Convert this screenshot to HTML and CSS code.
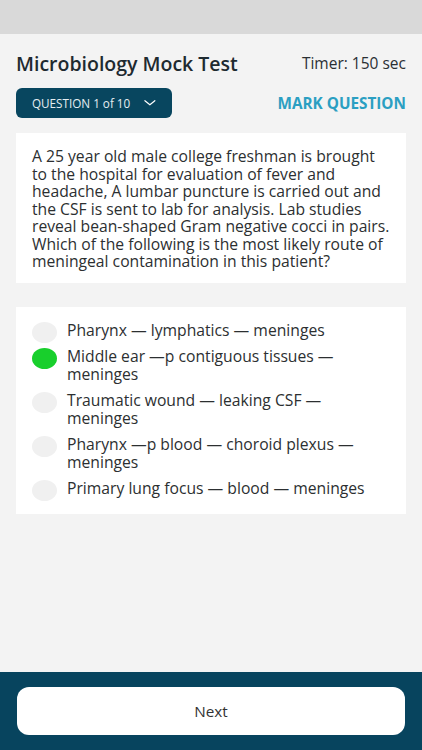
FILE: index.html
```html
<!DOCTYPE html>
<html lang="en">
<head>
    <meta charset="UTF-8" />
    <meta name="viewport" content="width=device-width, initial-scale=1.0" />
    <title>Microbiology Mock Test</title>
    <link rel="stylesheet" href="styles.css">
</head>
<body>
    <div class="statusbar"></div>

    <div class="content">
        <div class="header">
            <h1 class="title">Microbiology Mock Test</h1>
            <span class="timer">Timer: 150 sec</span>
        </div>

        <div class="toolbar">
            <button class="question-picker">
                QUESTION 1 of 10
                <svg width="13" height="8" viewBox="0 0 13 8"><path d="M1 1.5 L6.5 6 L12 1.5" fill="none" stroke="#fff" stroke-width="1.3" stroke-linecap="round" stroke-linejoin="round"/></svg>
            </button>
            <a href="#" class="mark">MARK QUESTION</a>
        </div>

        <div class="card question">
            A 25 year old male college freshman is brought to the hospital for evaluation of fever and headache, A lumbar puncture is carried out and the CSF is sent to lab for analysis. Lab studies reveal bean-shaped Gram negative cocci in pairs. Which of the following is the most likely route of meningeal contamination in this patient?
        </div>

        <!-- answer options -->
        <div class="card options">
            <div class="option"><span class="radio"></span><span class="label">Pharynx — lymphatics — meninges</span></div>
            <div class="option selected"><span class="radio"></span><span class="label">Middle ear —p contiguous tissues — meninges</span></div>
            <div class="option"><span class="radio"></span><span class="label">Traumatic wound — leaking CSF — meninges</span></div>
            <div class="option"><span class="radio"></span><span class="label">Pharynx —p blood — choroid plexus — meninges</span></div>
            <div class="option"><span class="radio"></span><span class="label">Primary lung focus — blood — meninges</span></div>
        </div>
    </div>

    <div class="footer">
        <button class="next">Next</button>
    </div>
</body>
</html>
```

FILE: styles.css
```css
body {
  margin: 0;
  height: 750px;
  display: flex;
  flex-direction: column;
  background-color: #f3f3f3;
  font-family: "Open Sans", "Noto Sans", sans-serif;
  color: #333;
}
.statusbar {
  height: 34px;
  background-color: #d9d9d9;
}
.content {
  flex: 1;
  padding: 0 16px;
}
.header {
  display: flex;
  justify-content: space-between;
  align-items: center;
  margin-top: 16px;
  height: 26px;
}
.title {
  margin: 0;
  font-size: 19.5px;
  font-weight: 600;
  color: #1e2a30;
}
.timer {
  font-size: 15.5px;
  color: #2a2f33;
}
.toolbar {
  display: flex;
  justify-content: space-between;
  align-items: center;
  margin-top: 12px;
}
.question-picker {
  display: flex;
  align-items: center;
  gap: 14px;
  width: 156px;
  height: 30px;
  padding: 0 16px;
  border: none;
  border-radius: 6px;
  background-color: #08465f;
  color: #e6eef2;
  font-family: inherit;
  font-size: 11.7px;
  white-space: nowrap;
}
.mark {
  text-decoration: none;
  color: #2b9fc2;
  font-size: 15.3px;
  font-weight: 700;
}
.card {
  background-color: #fff;
}
.question {
  margin-top: 15px;
  padding: 15px 16px 12px 16px;
  font-size: 15.7px;
  line-height: 17.5px;
  color: #2c2f31;
}
.options {
  margin-top: 24px;
  padding: 14px 16px 17px 16px;
  display: flex;
  flex-direction: column;
  gap: 8px;
}
.option {
  display: flex;
  align-items: flex-start;
  gap: 10px;
  font-size: 15.7px;
  line-height: 18px;
  color: #2c2f31;
}
.radio {
  flex: none;
  width: 25px;
  height: 21px;
  border-radius: 50%;
  background-color: #f0f0f0;
  margin-top: 1px;
  margin-bottom: -4px;
}
.option.selected .radio {
  background-color: #18cf2c;
}
.footer {
  height: 78px;
  background-color: #07445e;
  padding: 15px 17px 0 17px;
  box-sizing: border-box;
}
.next {
  width: 100%;
  height: 48px;
  border: none;
  border-radius: 12px;
  background-color: #fff;
  font-family: inherit;
  font-size: 15.3px;
  color: #333;
}
```
